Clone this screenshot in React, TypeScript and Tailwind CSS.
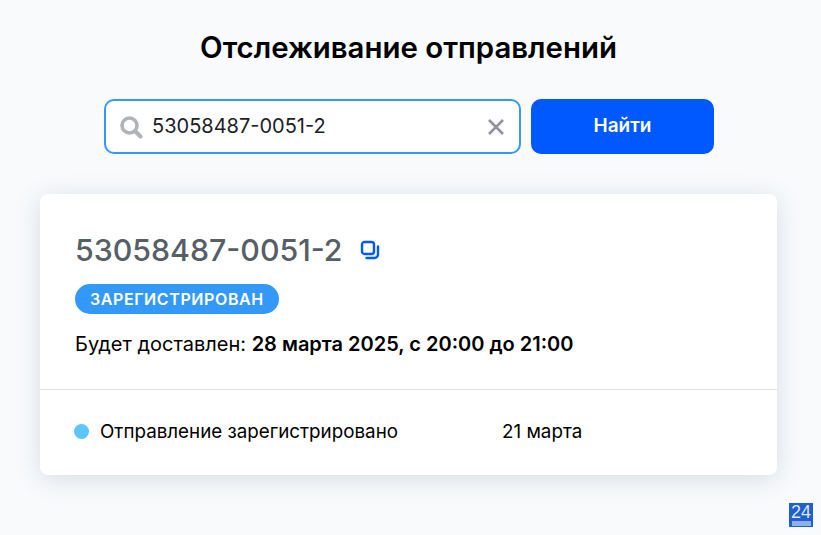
import React from 'react';

const TRACKING_NUMBER = '53058487-0051-2';

function SearchIcon() {
  return (
    <svg width="24" height="24" viewBox="0 0 24 24" fill="none" className="shrink-0">
      <circle cx="10.5" cy="10.5" r="7.5" stroke="#b0b4b8" strokeWidth="3.6" />
      <path d="M16.5 16.5L21.5 21.5" stroke="#b0b4b8" strokeWidth="4" strokeLinecap="round" />
    </svg>
  );
}

function ClearIcon() {
  return (
    <svg width="18" height="18" viewBox="0 0 18 18" fill="none" className="shrink-0 -ml-px">
      <path d="M2 2L16 16M16 2L2 16" stroke="#8e9499" strokeWidth="2.6" />
    </svg>
  );
}

function CopyIcon() {
  return (
    <svg width="20" height="20" viewBox="0 0 20 20" fill="none" className="shrink-0">
      <rect x="2" y="2" width="12" height="12" rx="2.5" stroke="#0059ff" strokeWidth="2.4" />
      <path d="M18 6.5V14.5C18 16.4 16.4 18 14.5 18H6.5" stroke="#0059ff" strokeWidth="2.4" strokeLinecap="round" />
    </svg>
  );
}

export default function App() {
  return (
    <div className="relative flex h-[535px] w-[821px] flex-col items-center overflow-hidden bg-[#f8fafc] pr-[4px] pt-[28px] font-['Inter',sans-serif] text-black">
      <h1 className="text-[29.4px] font-semibold leading-[40px]">Отслеживание отправлений</h1>

      {/* Search */}
      <div className="ml-px mt-[31px] flex w-[610px] gap-[10px]">
        <div className="flex h-[55px] w-[417px] items-center rounded-[10px] border-[2.5px] border-[#3399f8] bg-white pl-[13px] pr-[14px]">
          <SearchIcon />
          <span className="-mt-px ml-[9px] flex-1 text-[20px] text-[#1c2026]">{TRACKING_NUMBER}</span>
          <ClearIcon />
        </div>
        <button className="h-[55px] w-[183px] rounded-[10px] bg-[#0059ff] text-[19px] font-semibold text-white">
          Найти
        </button>
      </div>

      {/* Result card */}
      <div className="mt-[40px] w-[737px] rounded-[8px] bg-white shadow-[0_4px_24px_rgba(90,110,140,0.2)]">
        <div className="px-[35px] pb-[30px] pt-[37px]">
          <div className="flex items-center gap-[17px]">
            <span className="text-[30.3px] font-medium leading-[38px] text-[#565e66]">{TRACKING_NUMBER}</span>
            <CopyIcon />
          </div>
          <div className="mt-[15px] flex">
            <span className="flex h-[30px] items-center rounded-full bg-[#3399f8] px-[15px] text-[16px] font-semibold tracking-[0.6px] text-white">
              ЗАРЕГИСТРИРОВАН
            </span>
          </div>
          <p className="mt-[15px] text-[20px] leading-[30px]">
            Будет доставлен: <span className="font-semibold">28 марта 2025, с 20:00 до 21:00</span>
          </p>
        </div>
        <div className="h-px bg-[#dfe2e6]" />
        <div className="flex h-[85px] items-center pl-[34px]">
          <span className="-mt-[2px] h-[15px] w-[15px] rounded-full bg-[#5cc6fc]" />
          <span className="ml-[11px] w-[402px] text-[18.8px]">Отправление зарегистрировано</span>
          <span className="text-[18.8px]">21 марта</span>
        </div>
      </div>

      {/* Chat widget badge */}
      <div className="absolute left-[789px] top-[503px] flex h-[24px] w-[24px] flex-col items-center bg-[#1f5fcf]">
        <span className="text-[18px] font-light leading-[18px] text-[#dbe8fb] font-['Liberation_Sans',sans-serif]">24</span>
        <span className="h-[5px] w-[19px] bg-[#8fb0e8]" />
      </div>
    </div>
  );
}
